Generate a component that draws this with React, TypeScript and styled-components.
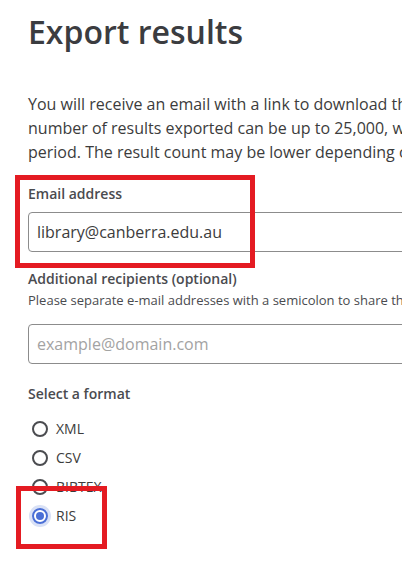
import React from 'react';
import styled, { createGlobalStyle, css } from 'styled-components';

const GlobalStyle = createGlobalStyle`
  html, body {
    margin: 0;
    padding: 0;
    background: #ffffff;
    overflow: hidden;
  }
  body {
    font-family: "Open Sans", "DejaVu Sans", sans-serif;
    color: #3c3c3c;
  }
`

const Page = styled.div`
  position: relative;
  width: 402px;
  height: 573px;
  overflow: hidden;
`

const Content = styled.main`
  width: 620px;
  padding: 12px 0 0 28px;
  display: flex;
  flex-direction: column;
`

const Title = styled.h1`
  margin: 0;
  font-size: 32px;
  line-height: 40px;
  font-weight: 600;
  color: #3b3c40;
`

const Intro = styled.p`
  margin: 40px 0 0;
  font-size: 16px;
  line-height: 24px;
  white-space: nowrap;
  color: #3c3c3c;
`

const Field = styled.div<{ $gap: number }>`
  display: flex;
  flex-direction: column;
  margin-top: ${p => p.$gap}px;
`

const Label = styled.label`
  font-size: 14px;
  line-height: 20px;
  font-weight: 600;
  color: #4a4b4f;
`

const Hint = styled.span`
  margin-top: 3px;
  font-size: 13px;
  line-height: 17px;
  color: #4a4b4f;
  white-space: nowrap;
`

const TextInput = styled.input<{ $gap: number }>`
  box-sizing: border-box;
  margin-top: ${p => p.$gap}px;
  height: 40px;
  width: 100%;
  padding: 0 8px;
  border: 1px solid #8c8c8c;
  border-radius: 4px;
  font-family: "Open Sans", sans-serif;
  font-size: 16px;
  color: #3c3c3c;
  background: #fff;
  outline: none;

  &::placeholder {
    color: #a3a3a3;
  }
`

const Options = styled.div`
  display: flex;
  flex-direction: column;
  margin-top: 10px;
  padding-left: 4px;
`

const Option = styled.label`
  display: flex;
  align-items: center;
  gap: 8px;
  height: 29px;
  font-size: 14px;
  color: #3c3c3c;
`

const Dot = styled.span<{ $checked?: boolean }>`
  position: relative;
  box-sizing: border-box;
  width: 16px;
  height: 16px;
  border-radius: 50%;
  border: 2px solid #4b4c50;
  flex-shrink: 0;

  ${p => p.$checked && css`
    border-color: #4a6fd6;
    box-shadow: 0 0 0 3px #d9e1f6;
    &:after {
      content: "";
      position: absolute;
      top: 2px;
      left: 2px;
      width: 8px;
      height: 8px;
      border-radius: 50%;
      background: #4a6fd6;
    }
  `}
`

const Marker = styled.div<{ $x: number; $y: number; $w: number; $h: number }>`
  position: absolute;
  box-sizing: border-box;
  left: ${p => p.$x}px;
  top: ${p => p.$y}px;
  width: ${p => p.$w}px;
  height: ${p => p.$h}px;
  border: 5px solid #e41b22;
  pointer-events: none;
`

const formats = ['XML', 'CSV', 'BIBTEX', 'RIS'];

const App: React.FC = () => {
  const selected = 'RIS';

  return <Page>
    <GlobalStyle/>
    <Content>
      <Title>Export results</Title>
      <Intro>
        You will receive an email with a link to download the file. The maximum<br/>
        number of results exported can be up to 25,000, within a 24 hour<br/>
        period. The result count may be lower depending on availability.
      </Intro>

      <Field $gap={20}>
        <Label>Email address</Label>
        <TextInput $gap={8} type="email" defaultValue="library@canberra.edu.au"/>
      </Field>

      <Field $gap={17}>
        <Label>Additional recipients (optional)</Label>
        <Hint>Please separate e-mail addresses with a semicolon to share the export with others.</Hint>
        <TextInput $gap={15} type="text" placeholder="example@domain.com"/>
      </Field>

      <Field $gap={20}>
        <Label>Select a format</Label>
        <Options>
          {formats.map(f => (
            <Option key={f}>
              <Dot $checked={f === selected}/>
              {f}
            </Option>
          ))}
        </Options>
      </Field>
    </Content>

    <Marker $x={15} $y={175} $w={240} $h={93}/>
    <Marker $x={16} $y={486} $w={91} $h={63}/>
  </Page>
}

export default App;
